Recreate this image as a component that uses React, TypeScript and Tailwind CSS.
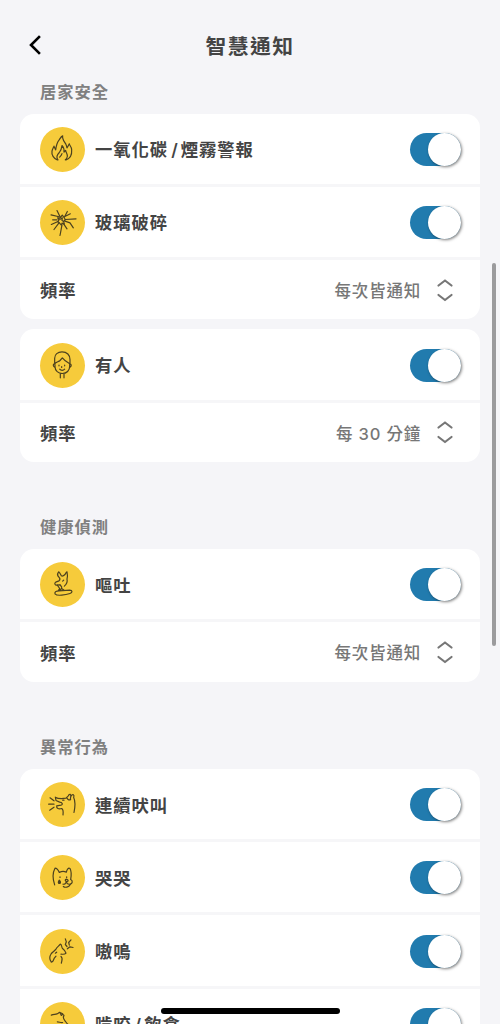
import type { ReactNode } from 'react';

const FireIcon = () => (
  <>
    <path d="M83 121C72 117 65 106 67 95C68 89 71 85 73 80C75 84 76 88 78 91C80 77 83 68 88 62C92 56 94 51 99 49C97 58 103 65 108 73C110 77 111 81 112 85C115 81 117 77 119 73C119 78 126 81 126 91C127 105 121 117 109 121" />
    <path d="M85 121C79 114 83 105 89 99C93 94 96 87 97 78C103 84 104 89 103 98L108 93C109 100 114 104 113 111C112 116 110 119 107 121M90 113C93 110 96 107 97 102" />
  </>
);

const GlassIcon = () => (
  <>
    <path d="M64 67L85 72M82 54L91 73M104 74L113 57M104 73L122 64M107 81L139 79M106 86L121 91L131 106M102 94L112 109M97 97L91 129M88 91L73 111M85 87L65 96M69 82L82 82" />
    <path d="M85 72L92 75L98 68L103 75L107 81L102 87L104 95L97 92L95 98L89 91L84 88L88 82L84 76L92 80L98 76L97 84L102 87" />
  </>
);

const PersonIcon = () => (
  <>
    <path d="M75 86V68C75 57 84 49 97 49C112 49 121 59 121 72V86M75 85C79 79 87 79 91 75L98 67C105 76 112 80 119 84M76 87V94C76 106 86 114 98 114C111 114 120 105 120 93V86M74 85C70 85 69 93 76 96M121 85C126 86 126 94 120 96M92 114V127M103 114V127" />
    <path d="M88 89V91M105 89V91M96 93V96M90 101C94 106 101 106 105 101" />
  </>
);

const VomitIcon = () => (
  <>
    <path d="M88 68C83 64 83 57 87 52C91 55 93 60 95 64C98 66 102 64 106 60C108 57 109 54 112 52C114 61 114 68 112 74C114 82 111 89 104 95M88 68C92 72 91 76 88 79L78 83C74 85 75 91 79 92L91 91" />
    <path d="M91 91C95 95 98 97 96 102L90 107M83 92L90 102L85 110M96 102L103 107M76 118C74 112 81 109 88 109L120 107C129 107 129 115 121 117C109 121 82 126 76 118ZM99 80L102 77" />
  </>
);

const BarkIcon = () => (
  <>
    <path d="M77 68C85 73 97 73 109 71L116 64C120 56 125 59 123 68L122 75M125 64C129 57 135 60 132 69C137 79 137 94 133 114M112 71C115 76 119 78 123 75M77 68L79 78L90 83C98 84 101 90 94 92L81 94C80 102 87 105 96 102C102 105 101 112 100 121" />
    <path d="M61 70L73 79M57 89H73M60 107L73 98M99 77H103" />
  </>
);

const CryIcon = () => (
  <>
    <path d="M75 112C69 94 70 73 76 62C81 62 86 68 89 75C96 71 103 71 110 74C112 65 116 60 121 63C126 72 125 85 123 96C130 99 129 109 121 110C115 111 111 107 110 102C109 108 105 111 100 110" />
    <path d="M110 95C105 97 106 101 111 102C117 102 117 97 110 95ZM91 88V90M111 88V90M101 117C106 121 117 120 122 111" />
    <path d="M89 98C85 103 85 108 89 108C94 108 93 102 89 98Z" fill="#4d421f" />
  </>
);

const HowlIcon = () => (
  <>
    <path d="M65 122C58 113 61 102 65 96C70 90 75 88 79 83C81 77 87 74 92 68C97 69 95 76 98 80C103 84 108 90 109 95C105 100 99 98 94 98M94 105C101 111 96 117 95 125M65 122C72 121 71 114 74 110L79 104M77 95L81 92" />
    <path d="M107 52L110 61L107 69L112 75M124 55L117 63L119 71M130 78L121 76L113 82" />
  </>
);

const BiteIcon = () => (
  <>
    <path d="M65 62C72 59 77 60 82 58C88 57 87 52 91 54L95 63C98 60 102 58 103 63C98 69 102 74 106 79C110 84 113 89 117 91M91 54L99 58" />
    <path d="M83 82C89 82 93 85 99 84M79 92L88 97" />
  </>
);

const CircleIcon = ({ children }: { children: ReactNode }) => (
  <svg
    viewBox="31 22.5 135 135"
    className="mr-2.5 size-[45px] shrink-0 rounded-full bg-[#f6cb3b]"
    fill="none"
    stroke="#4d421f"
    strokeWidth="3.6"
    strokeLinecap="round"
    strokeLinejoin="round"
  >
    {children}
  </svg>
);

const Toggle = () => (
  <button
    role="switch"
    aria-checked="true"
    className="flex h-[33px] w-[51px] shrink-0 items-center justify-end rounded-full bg-[#217bae]"
  >
    <span className="size-[33px] rounded-full bg-white shadow-[1px_1px_3px_rgba(0,0,0,0.5)]" />
  </button>
);

const AlertRow = ({ icon, label }: { icon: ReactNode; label: string }) => {
  const [first, second] = label.split('/');

  return (
    <div className="flex h-[73.3px] items-center border-b-[3px] border-[#f6f6f8] pt-px pr-[19px] pl-5">
      <CircleIcon>{icon}</CircleIcon>
      <span className="grow pt-0.5 text-[17.3px] font-bold tracking-[1px] whitespace-nowrap">
        {first}
        {second && <span className="mr-0.5 ml-[3px] font-semibold">/</span>}
        {second}
      </span>
      <Toggle />
    </div>
  );
};

const FrequencyRow = ({ value }: { value: string }) => (
  <div className="flex h-[59.4px] items-center pr-[26px] pl-5">
    <span className="grow pt-[3px] text-[17.3px] font-bold tracking-[1px]">頻率</span>
    <span className="pt-[3px] text-[16.5px] font-medium tracking-[0.8px] text-[#777]">{value}</span>
    <svg
      viewBox="0 0 18 24"
      className="ml-[15px] h-6 w-[18px]"
      fill="none"
      stroke="#777"
      strokeWidth="2.2"
      strokeLinecap="round"
      strokeLinejoin="round"
    >
      <path d="M2.5 7.5L9 2.5L15.5 7.5M2.5 17L9 22L15.5 17" />
    </svg>
  </div>
);

const Card = ({ children }: { children: ReactNode }) => (
  <div className="overflow-hidden rounded-[14px] bg-white">{children}</div>
);

const SectionTitle = ({ children }: { children: ReactNode }) => (
  <h2 className="flex h-11 items-center pl-5 text-[16.3px] font-bold tracking-[1px] text-[#808080]">
    {children}
  </h2>
);

export default function App() {
  return (
    <div className="relative h-[1024px] w-[500px] overflow-hidden bg-[#f5f5f8] font-['Inter','Noto_Sans_CJK_TC',sans-serif] text-[#444]">
      <header className="flex h-[70px] items-center px-7 pt-[19px]">
        <button aria-label="back" className="w-4">
          <svg
            viewBox="0 0 16 22"
            className="h-[22px] w-4"
            fill="none"
            stroke="#000"
            strokeWidth="2.6"
            strokeLinecap="square"
          >
            <path d="M11 3L3 11L11 19" />
          </svg>
        </button>
        <h1 className="grow pt-1 pr-4 text-center text-[20.8px] font-bold tracking-[1.4px]">
          智慧通知
        </h1>
      </header>

      <main className="px-5">
        <SectionTitle>居家安全</SectionTitle>
        <div className="-mt-[0.5px] flex flex-col gap-2.5">
          <Card>
            <AlertRow icon={<FireIcon />} label="一氧化碳/煙霧警報" />
            <AlertRow icon={<GlassIcon />} label="玻璃破碎" />
            <FrequencyRow value="每次皆通知" />
          </Card>
          <Card>
            <AlertRow icon={<PersonIcon />} label="有人" />
            <FrequencyRow value="每 30 分鐘" />
          </Card>
        </div>

        <div className="mt-[43px]">
          <SectionTitle>健康偵測</SectionTitle>
          <Card>
            <AlertRow icon={<VomitIcon />} label="嘔吐" />
            <FrequencyRow value="每次皆通知" />
          </Card>
        </div>

        <div className="mt-[43px]">
          <SectionTitle>異常行為</SectionTitle>
          <Card>
            <AlertRow icon={<BarkIcon />} label="連續吠叫" />
            <AlertRow icon={<CryIcon />} label="哭哭" />
            <AlertRow icon={<HowlIcon />} label="嗷嗚" />
            <AlertRow icon={<BiteIcon />} label="啃咬/飲食" />
          </Card>
        </div>
      </main>

      {/* scroll thumb and home indicator float over the list */}
      <div className="absolute top-[263px] right-1 h-[383px] w-1 rounded-full bg-[#9b9b9d]" />
      <div className="absolute bottom-[10px] left-[161px] h-1.5 w-[179px] rounded-full bg-black" />
    </div>
  );
}
